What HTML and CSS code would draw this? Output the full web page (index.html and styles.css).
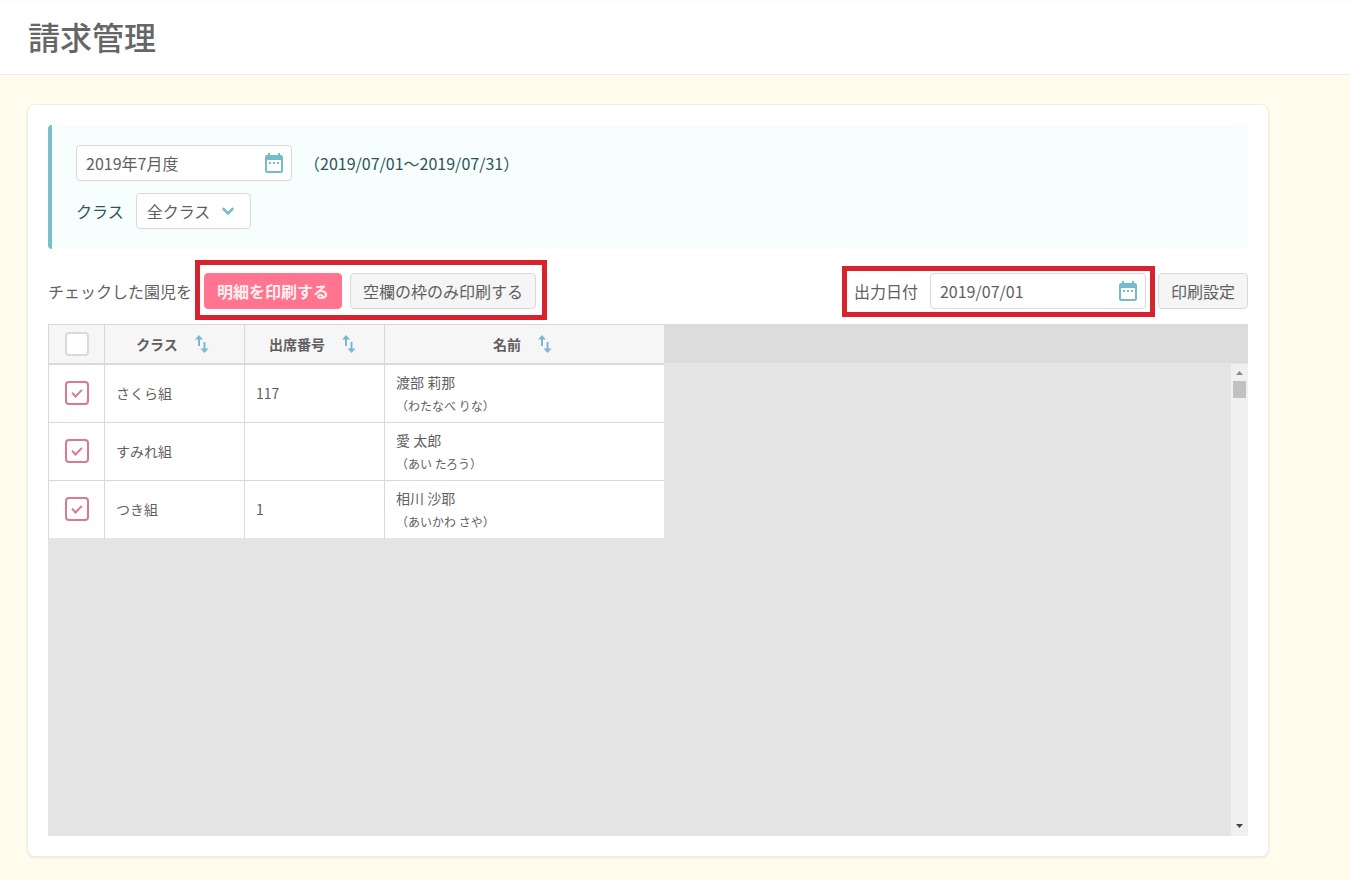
FILE: index.html
```html
<!DOCTYPE html>
<html lang="ja">
<head>
<meta charset="utf-8">
<meta name="viewport" content="width=device-width, initial-scale=1">
<title>請求管理</title>
<link rel="stylesheet" href="styles.css">
</head>
<body>
<svg class="sprite" aria-hidden="true">
  <symbol id="calendar" viewBox="0 0 24 24"><path d="M9 11H7v2h2v-2zm4 0h-2v2h2v-2zm4 0h-2v2h2v-2zm2-7h-1V2h-2v2H8V2H6v2H5c-1.11 0-1.99.9-1.99 2L3 20c0 1.1.89 2 2 2h14c1.1 0 2-.9 2-2V6c0-1.1-.9-2-2-2zm0 16H5V9h14v11z"/></symbol>
  <symbol id="chevron" viewBox="0 0 24 24"><path d="M7.700 8.200 12 12.500l4.300-4.300L18.200 10 12 16.200 5.800 10z"/></symbol>
  <symbol id="sort" viewBox="0 0 18 18"><path d="M5 0l4 4.500H6V11H4V4.500H1zM9.500 7h2v6.500h3L10.500 18l-4-4.500h3z"/></symbol>
</svg>

<header class="page-header">
  <h1 class="page-title">請求管理</h1>
</header>

<main class="content">
  <section class="card">
    <div class="filter">
      <div class="filter-row">
        <div class="date-field">
          <input class="date-input" type="text" value="2019年7月度" aria-label="対象月">
          <button class="icon-button" type="button" aria-label="月を選択"><svg class="icon"><use href="#calendar"/></svg></button>
        </div>
        <span class="period">（2019/07/01～2019/07/31）</span>
      </div>
      <div class="filter-row">
        <label for="class-select">クラス</label>
        <div class="select-field">
          <select class="select" id="class-select"><option>全クラス</option></select>
          <svg class="icon select-icon" aria-hidden="true"><use href="#chevron"/></svg>
        </div>
      </div>
    </div>

    <div class="toolbar">
      <span>チェックした園児を</span>
      <div class="highlight highlight-actions">
        <button class="button button-primary" type="button">明細を印刷する</button>
        <button class="button" type="button">空欄の枠のみ印刷する</button>
      </div>
      <div class="highlight highlight-date">
        <label for="output-date">出力日付</label>
        <div class="date-field">
          <input class="date-input" id="output-date" type="text" value="2019/07/01">
          <button class="icon-button" type="button" aria-label="日付を選択"><svg class="icon"><use href="#calendar"/></svg></button>
        </div>
      </div>
      <button class="button" type="button">印刷設定</button>
    </div>

    <div class="grid">
      <div class="grid-body">
        <table class="table">
          <colgroup><col class="col-check"><col class="col-class"><col class="col-number"><col class="col-name"></colgroup>
          <thead>
            <tr>
              <th scope="col"><input class="check" type="checkbox" aria-label="すべて選択"></th>
              <th scope="col"><button class="sort-button" type="button">クラス<svg class="sort-icon"><use href="#sort"/></svg></button></th>
              <th scope="col"><button class="sort-button" type="button">出席番号<svg class="sort-icon"><use href="#sort"/></svg></button></th>
              <th scope="col"><button class="sort-button" type="button">名前<svg class="sort-icon"><use href="#sort"/></svg></button></th>
            </tr>
          </thead>
          <tbody>
            <tr>
              <td class="check-cell"><input class="check" type="checkbox" checked aria-label="渡部 莉那を選択"></td>
              <td>さくら組</td>
              <td>117</td>
              <td class="name-cell">渡部 莉那<span class="kana">（わたなべ りな）</span></td>
            </tr>
            <tr>
              <td class="check-cell"><input class="check" type="checkbox" checked aria-label="愛 太郎を選択"></td>
              <td>すみれ組</td>
              <td></td>
              <td class="name-cell">愛 太郎<span class="kana">（あい たろう）</span></td>
            </tr>
            <tr>
              <td class="check-cell"><input class="check" type="checkbox" checked aria-label="相川 沙耶を選択"></td>
              <td>つき組</td>
              <td>1</td>
              <td class="name-cell">相川 沙耶<span class="kana">（あいかわ さや）</span></td>
            </tr>
          </tbody>
        </table>
      </div>
      <div class="scrollbar" aria-hidden="true">
        <svg class="scroll-arrow scroll-up" viewBox="0 0 17 17"><path d="M5 11h7L8.500 7z"/></svg>
        <div class="scroll-thumb"></div>
        <svg class="scroll-arrow scroll-down" viewBox="0 0 17 17"><path d="M5 5h7L8.500 9z"/></svg>
      </div>
    </div>
  </section>
</main>
</body>
</html>
```
FILE: styles.css
```css
* {
  box-sizing: border-box;
}

body {
  margin: 0;
  min-height: 100vh;
  display: flex;
  flex-direction: column;
  background: #fffbed;
  color: #5f5f5f;
  font-family: "Noto Sans CJK JP", "Noto Sans", sans-serif;
  font-size: 16px;
  line-height: 24px;
}

button,
input,
select {
  margin: 0;
  color: inherit;
  font: inherit;
}

.sprite {
  position: absolute;
  width: 0;
  height: 0;
}

.page-header {
  padding: 11px 28px 15px;
  background: #fff;
  border-top: 2px solid #fffafb;
  border-bottom: 1px solid #ecebe8;
}

.page-title {
  margin: 0;
  color: #666;
  font-size: 32px;
  font-weight: 500;
  line-height: 46px;
}

.content {
  flex: 1;
  display: flex;
  padding: 29px 81px 23px 27px;
}

.card {
  flex: 1;
  min-width: 0;
  display: flex;
  flex-direction: column;
  padding: 20px;
  background: #fff;
  border: 1px solid #f0efe6;
  border-radius: 8px;
  box-shadow: 0 1px 2px rgba(0, 0, 0, 0.08);
}

.filter {
  display: flex;
  flex-direction: column;
  gap: 12px;
  padding: 20px 24px;
  background: #f6fffe;
  border-left: 4px solid #7bbfcc;
  border-radius: 4px;
  color: #2d5555;
}

.filter-row {
  display: flex;
  align-items: center;
  gap: 12px;
}

.date-field {
  display: flex;
  align-items: center;
  width: 216px;
  height: 36px;
  padding: 0 5px 0 9px;
  background: #fff;
  border: 1px solid #d9d9d9;
  border-radius: 4px;
  color: #5f5f5f;
}

.date-input {
  flex: 1;
  min-width: 0;
  padding: 0;
  background: none;
  border: 0;
}

.icon-button {
  display: flex;
  padding: 0;
  background: none;
  border: 0;
}

.icon {
  width: 24px;
  height: 24px;
  fill: #74bccd;
}

.select-field {
  position: relative;
  color: #5f5f5f;
}

.select {
  display: block;
  height: 36px;
  padding: 0 38px 0 10px;
  appearance: none;
  background: #fff;
  border: 1px solid #d9d9d9;
  border-radius: 4px;
}

.select-icon {
  position: absolute;
  top: 6px;
  right: 11px;
  pointer-events: none;
}

.toolbar {
  display: flex;
  align-items: baseline;
  gap: 3px;
  margin: 11px 0 4px;
}

.highlight {
  display: flex;
  align-items: baseline;
  border: 5px solid #d8232e;
}

.highlight-actions {
  gap: 8px;
  padding: 8px 6px 6px 4px;
}

.highlight-date {
  gap: 12px;
  margin-left: auto;
  padding: 2px 4px 3px 7px;
}

.button {
  height: 36px;
  padding: 0 12px;
  background: #f5f5f5;
  border: 1px solid #d9d9d9;
  border-radius: 4px;
  white-space: nowrap;
}

.button-primary {
  background: #ff758f;
  border-color: #ff758f;
  color: #fff0f2;
  font-weight: 700;
}

.grid {
  flex: 1;
  display: flex;
  background: linear-gradient(#dcdcdc 39px, #e4e4e4 39px);
}

.grid-body {
  flex: 1;
  min-width: 0;
}

.table {
  width: 616px;
  table-layout: fixed;
  border-spacing: 0;
  font-size: 14px;
}

.col-check {
  width: 56px;
}

.col-class,
.col-number {
  width: 140px;
}

.col-name {
  width: 280px;
}

.table th {
  height: 41px;
  padding: 0;
  background: #f6f6f6;
  border: 0 solid #d9d9d9;
  border-width: 1px 0 2px 1px;
}

.table td {
  height: 58px;
  padding: 4px 11px 5px;
  background: #fff;
  border: 0 solid #d9d9d9;
  border-width: 0 0 1px 1px;
}

.table tr:last-child td {
  border-bottom-color: #e4e4e4;
}

.table .check-cell {
  padding: 0 0 2px;
}

.table .name-cell {
  padding: 5px 11px 4px;
}

.kana {
  display: block;
  font-size: 12px;
}

.sort-button {
  display: flex;
  justify-content: center;
  align-items: center;
  gap: 16px;
  width: 100%;
  padding: 0 1px 0 0;
  background: none;
  border: 0;
}

.sort-icon {
  width: 18px;
  height: 18px;
  fill: #7ab8d0;
}

.check {
  display: grid;
  place-content: center;
  width: 24px;
  height: 24px;
  margin: 0 auto;
  appearance: none;
  background: #fff;
  border: 2px solid #dadada;
  border-radius: 4px;
}

.check:checked {
  border-color: #db7a8f;
}

.check:checked::after {
  content: "";
  width: 4px;
  height: 8px;
  margin-bottom: 2px;
  border: solid #db7a8f;
  border-width: 0 2px 2px 0;
  transform: rotate(45deg);
}

.scrollbar {
  display: flex;
  flex-direction: column;
  align-items: center;
  width: 17px;
  margin-top: 40px;
  background: #f0f0f0;
}

.scroll-arrow {
  width: 17px;
  height: 17px;
}

.scroll-up {
  fill: #8c8c8c;
}

.scroll-down {
  margin-top: auto;
  fill: #444;
}

.scroll-thumb {
  width: 13px;
  height: 17px;
  background: #c1c1c1;
}
```
